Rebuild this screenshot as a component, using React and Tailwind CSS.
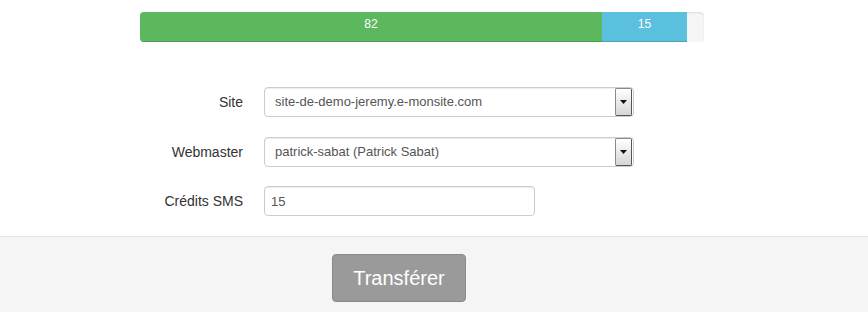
import React from 'react';

const font = "font-['Liberation_Sans',Arial,sans-serif]";

const SelectBox = ({ value }) => (
  <div className="ml-[21px] flex h-[30px] w-[370px] items-center justify-between rounded-[4px] border border-[#cccccc] bg-white pl-[10px] pr-[1px] text-[13px] text-[#555555] shadow-[inset_0_1px_1px_rgba(0,0,0,0.075)]">
    <span>{value}</span>
    <div className="flex h-[28px] w-[17px] items-center justify-center rounded-[2px] border border-[#8a8a8a] border-r-[#555555] border-b-[#555555] bg-gradient-to-b from-[#ffffff] to-[#d6d6d6]">
      <svg width="7" height="4" viewBox="0 0 7 4">
        <path d="M0 0 H7 L3.5 4 Z" fill="#111" />
      </svg>
    </div>
  </div>
);

const Row = ({ label, children, className }) => (
  <div className={`flex items-center ${className}`}>
    <label className="w-[243px] text-right text-[14px] text-[#333333]">{label}</label>
    {children}
  </div>
);

const App = () => {
  return (
    <div className={`w-[868px] h-[312px] bg-white ${font}`}>
      {/* progress bar */}
      <div className="pt-[12px] pl-[140px]">
        <div className="flex h-[30px] w-[564px] overflow-hidden rounded-[4px] bg-[#f5f5f5] shadow-[inset_0_1px_2px_rgba(0,0,0,0.1)]">
          <div className="flex w-[462px] items-start justify-center bg-[#5cb85c] pt-[3px] text-[12px] text-white shadow-[inset_0_-1px_0_rgba(0,0,0,0.15)]">82</div>
          <div className="flex w-[85px] items-start justify-center bg-[#5bc0de] pt-[3px] text-[12px] text-white shadow-[inset_0_-1px_0_rgba(0,0,0,0.15)]">15</div>
        </div>
      </div>

      {/* form */}
      <div className="pt-[45px]">
        <Row label="Site">
          <SelectBox value="site-de-demo-jeremy.e-monsite.com" />
        </Row>
        <Row label="Webmaster" className="mt-[20px]">
          <SelectBox value="patrick-sabat (Patrick Sabat)" />
        </Row>
        <Row label="Crédits SMS" className="mt-[19px]">
          <input
            defaultValue="15"
            className="ml-[21px] h-[30px] w-[271px] rounded-[4px] border border-[#cccccc] px-[6px] text-[13px] text-[#555555] outline-none shadow-[inset_0_1px_1px_rgba(0,0,0,0.075)]"
          />
        </Row>
      </div>

      {/* footer */}
      <div className="mt-[20px] h-[76px] border-t border-[#e5e5e5] bg-[#f5f5f5] pt-[17px] pl-[332px]">
        <button className="h-[48px] w-[134px] rounded-[4px] border border-[#8a8a8a] bg-[#9a9a9a] text-[20px] text-white">
          Transférer
        </button>
      </div>
    </div>
  );
};

export default App;
